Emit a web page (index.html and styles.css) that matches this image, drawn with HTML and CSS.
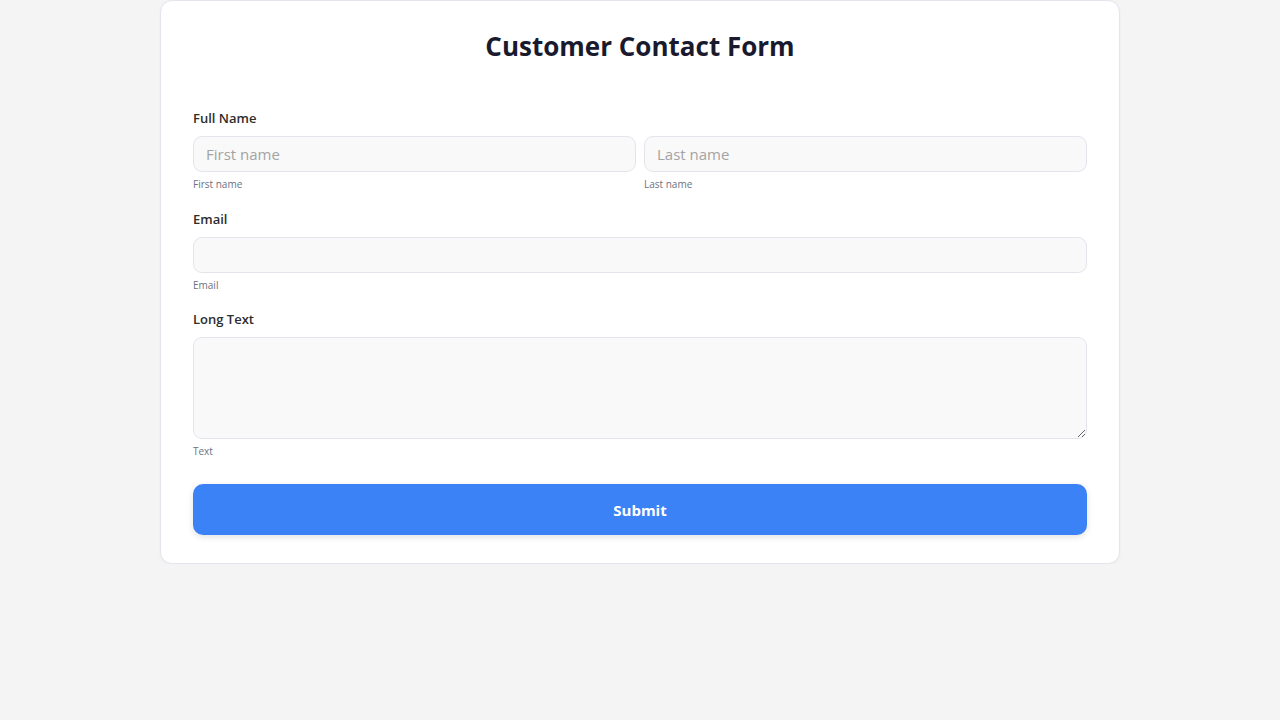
FILE: index.html
```html
<!DOCTYPE html>
<html lang="en">
<head>
<meta charset="utf-8">
<title>Customer Contact Form</title>
<link rel="stylesheet" href="styles.css">
</head>
<body>
<main class="card">
  <h1 class="title">Customer Contact Form</h1>
  <form class="form">
    <div class="group">
      <label class="label">Full Name</label>
      <div class="row">
        <div class="col">
          <input class="input" type="text" placeholder="First name">
          <span class="hint">First name</span>
        </div>
        <div class="col">
          <input class="input" type="text" placeholder="Last name">
          <span class="hint">Last name</span>
        </div>
      </div>
    </div>
    <div class="group group-tight">
      <label class="label">Email</label>
      <input class="input" type="email">
      <span class="hint">Email</span>
    </div>
    <div class="group">
      <label class="label">Long Text</label>
      <textarea class="input textarea"></textarea>
      <span class="hint">Text</span>
    </div>
    <button class="submit" type="button">Submit</button>
  </form>
</main>
</body>
</html>
```

FILE: styles.css
```css
* { box-sizing: border-box; }
html, body { margin: 0; padding: 0; }
body {
  background: #f4f4f4;
  font-family: "Open Sans", "Noto Sans", sans-serif;
  color: #333;
}
.card {
  width: 960px;
  margin: 0 auto;
  background: #fff;
  border: 1px solid #e2e5ec;
  border-radius: 12px;
  padding: 30px 32px 28px;
  box-shadow: 0 1px 3px rgba(0,0,0,0.04);
}
.title {
  margin: 0 0 47px;
  text-align: center;
  font-size: 26px;
  line-height: 30px;
  font-weight: 700;
  color: #1a1a2e;
}
.form { display: flex; flex-direction: column; }
.group { display: flex; flex-direction: column; margin-bottom: 17px; }
.group-tight { margin-bottom: 16px; }
.label {
  font-size: 13px;
  font-weight: 600;
  color: #2d2d2d;
  line-height: 20px;
  margin-bottom: 8px;
}
.row { display: flex; gap: 8px; }
.col { flex: 1; display: flex; flex-direction: column; }
.input {
  width: 100%;
  height: 36px;
  background: #f9f9fa;
  border: 1px solid #e2e5ec;
  border-radius: 9px;
  padding: 0 12px;
  font-family: inherit;
  font-size: 15px;
  color: #333;
  outline: none;
}
.input::placeholder { color: #a3a3a3; }
.textarea { height: 102px; resize: vertical; display: block; }
.hint {
  font-size: 10px;
  line-height: 15px;
  color: #6b7280;
  margin-top: 5px;
}
.submit {
  margin-top: 8px;
  height: 51px;
  border: none;
  border-radius: 10px;
  background: #3b82f6;
  color: #fff;
  font-family: inherit;
  font-size: 15px;
  font-weight: 700;
  box-shadow: 0 2px 6px rgba(0,0,0,0.12);
  cursor: pointer;
}
```
